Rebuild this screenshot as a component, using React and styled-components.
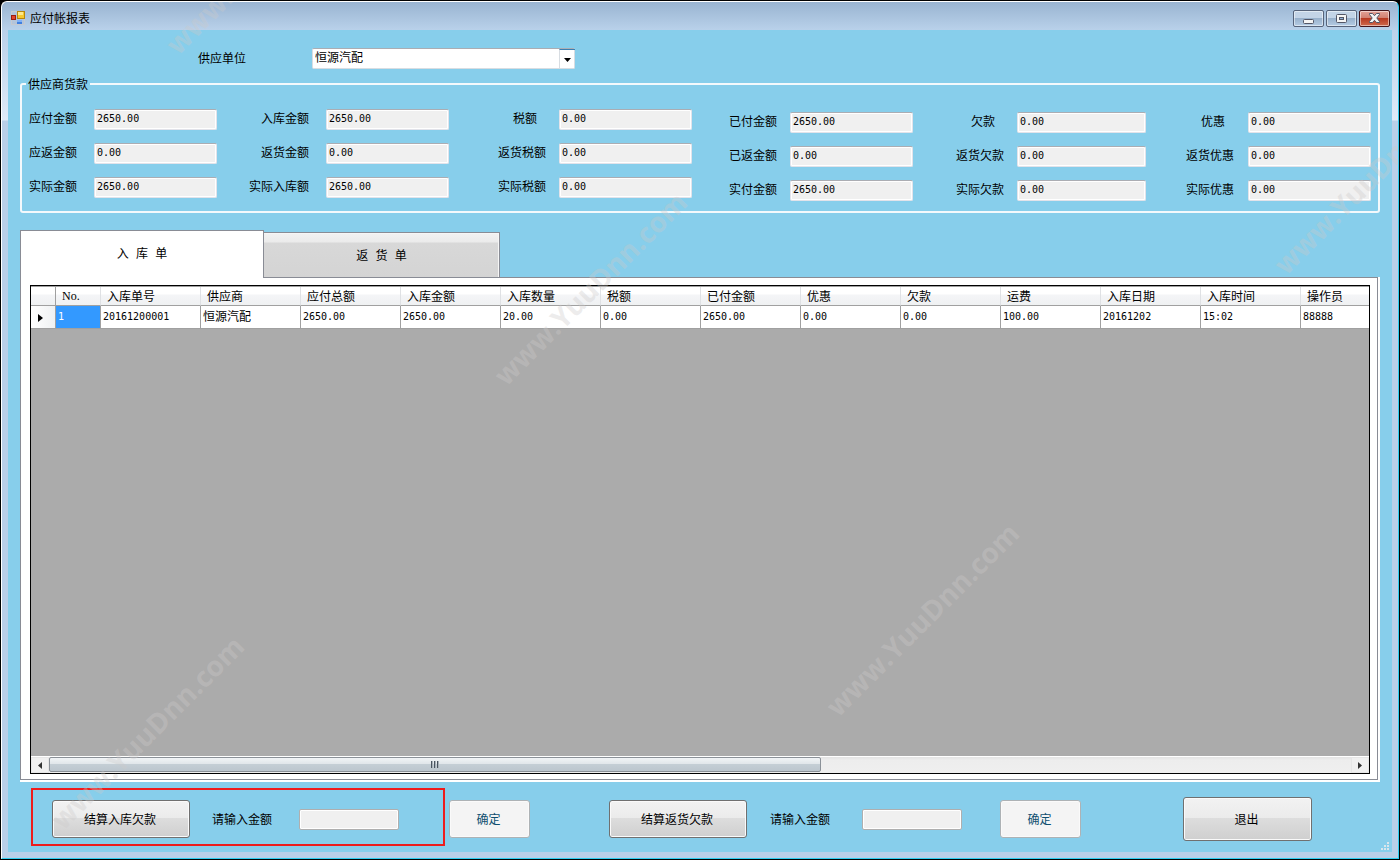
import React, { useState } from 'react'
import styled, { createGlobalStyle, css } from 'styled-components'

const GlobalStyle = createGlobalStyle`
    * {
        box-sizing: border-box;
    }

    body {
        margin: 0;
        background: #000000;
        font-family: 'Noto Sans CJK SC', sans-serif;
        font-size: 12px;
        line-height: 16px;
        color: #000000;
    }

    button,
    input,
    select {
        font: inherit;
        color: inherit;
    }
`

const summaryGroups = [
    {
        share: 188,
        width: 123,
        gap: 17,
        fields: [
            ['应付金额', '2650.00'],
            ['应返金额', '0.00'],
            ['实际金额', '2650.00'],
        ],
    },
    {
        share: 232,
        width: 123,
        gap: 17,
        fields: [
            ['入库金额', '2650.00'],
            ['返货金额', '0.00'],
            ['实际入库额', '2650.00'],
        ],
    },
    {
        share: 243,
        width: 133,
        gap: 13,
        fields: [
            ['税额', '0.00'],
            ['返货税额', '0.00'],
            ['实际税额', '0.00'],
        ],
    },
    {
        share: 221,
        width: 123,
        gap: 13,
        low: true,
        fields: [
            ['已付金额', '2650.00'],
            ['已返金额', '0.00'],
            ['实付金额', '2650.00'],
        ],
    },
    {
        share: 233,
        width: 129,
        gap: 13,
        low: true,
        fields: [
            ['欠款', '0.00'],
            ['返货欠款', '0.00'],
            ['实际欠款', '0.00'],
        ],
    },
    {
        share: 225,
        width: 123,
        gap: 14,
        low: true,
        fields: [
            ['优惠', '0.00'],
            ['返货优惠', '0.00'],
            ['实际优惠', '0.00'],
        ],
    },
]

const columns = [
    '入库单号',
    '供应商',
    '应付总额',
    '入库金额',
    '入库数量',
    '税额',
    '已付金额',
    '优惠',
    '欠款',
    '运费',
    '入库日期',
    '入库时间',
    '操作员',
]

const rows = [
    [
        '20161200001',
        '恒源汽配',
        '2650.00',
        '2650.00',
        '20.00',
        '0.00',
        '2650.00',
        '0.00',
        '0.00',
        '100.00',
        '20161202',
        '15:02',
        '88888',
    ],
]

const watermarks = [
    { x: 260, y: -45 },
    { x: 588, y: 286 },
    { x: 1368, y: 175 },
    { x: 145, y: 730 },
    { x: 920, y: 617 },
]

const FormIcon = () => (
    <svg width='14' height='14' viewBox='0 0 14 14' aria-hidden='true'>
        <rect x='0.5' y='0.5' width='13' height='13' fill='#b3c4da' stroke='#c5c9d0' />
        <rect x='6.5' y='0.5' width='7' height='7' fill='#f6c92f' stroke='#b8860b' />
        <rect x='7' y='1' width='5' height='3' fill='#fde98c' />
        <rect x='0.5' y='4.5' width='4' height='4' fill='#e0452c' stroke='#9c1c10' />
        <rect x='6' y='9' width='5' height='4' fill='#3f7fe0' />
        <rect x='6' y='9' width='5' height='2' fill='#7fb0f5' />
    </svg>
)

const SummaryGroup = ({ group }) => (
    <Group $low={group.low}>
        {group.fields.map(([label, value]) => (
            <Field key={label} $gap={group.gap}>
                <FieldLabel htmlFor={label} $short={label.length === 2}>
                    {label}
                </FieldLabel>
                <TextBox id={label} $width={group.width} value={value} readOnly />
            </Field>
        ))}
    </Group>
)

const App = () => {
    const [tab, setTab] = useState('in')

    return (
        <>
            <GlobalStyle />
            <Window>
                <TitleBar>
                    <FormIcon />
                    <Title>应付帐报表</Title>
                    <CaptionButton aria-label='最小化'>
                        <svg width='11' height='11' viewBox='0 0 11 11'>
                            <rect x='0.5' y='6.5' width='10' height='4' rx='1' fill='#f4f4f4' stroke='#535666' />
                        </svg>
                    </CaptionButton>
                    <CaptionButton aria-label='最大化'>
                        <svg width='11' height='9' viewBox='0 0 11 9'>
                            <rect x='0.5' y='0.5' width='10' height='8' rx='1' fill='#f4f4f4' stroke='#535666' />
                            <rect x='3.5' y='3.5' width='4' height='2' fill='#8fb0d6' stroke='#535666' />
                        </svg>
                    </CaptionButton>
                    <CaptionButton aria-label='关闭' $close>
                        <svg width='13' height='10' viewBox='0 0 13 10'>
                            <path
                                d='M1.500 .5H4.500L6.500 2.700 8.500 .5H11.500V1.500L8.800 5 11.500 8.500V9.500H8.500L6.500 7.300 4.500 9.500H1.500V8.500L4.200 5 1.500 1.500Z'
                                fill='#f4f4f4'
                                stroke='#535666'
                            />
                        </svg>
                    </CaptionButton>
                </TitleBar>

                <Client>
                    <SupplierRow>
                        <SupplierLabel htmlFor='supplier'>供应单位</SupplierLabel>
                        <SelectWrap>
                            <Select id='supplier'>
                                <option>恒源汽配</option>
                            </Select>
                            <SelectArrow>
                                <svg width='7' height='4' viewBox='0 0 7 4'>
                                    <path d='M0 0H7L3.5 4Z' fill='#000000' />
                                </svg>
                            </SelectArrow>
                        </SelectWrap>
                    </SupplierRow>

                    <Summary>
                        <legend>供应商货款</legend>
                        <SummaryGrid>
                            {summaryGroups.map((group) => (
                                <SummaryGroup key={group.fields[0][0]} group={group} />
                            ))}
                        </SummaryGrid>
                    </Summary>

                    <Tabs role='tablist'>
                        <Tab role='tab' $active={tab === 'in'} onClick={() => setTab('in')}>
                            入 库 单
                        </Tab>
                        <Tab role='tab' $active={tab === 'back'} onClick={() => setTab('back')}>
                            返 货 单
                        </Tab>
                    </Tabs>

                    <TabPanel role='tabpanel'>
                        <GridView>
                            <TableArea>
                                <Table>
                                    <colgroup>
                                        <col width='25' />
                                        <col width='45' />
                                        {columns.map((name) => (
                                            <col key={name} width='100' />
                                        ))}
                                    </colgroup>
                                    <thead>
                                        <tr>
                                            <th />
                                            <NumberHead>No.</NumberHead>
                                            {columns.map((name) => (
                                                <th key={name}>{name}</th>
                                            ))}
                                        </tr>
                                    </thead>
                                    <tbody>
                                        {rows.map((row, index) => (
                                            <tr key={row[0]}>
                                                <RowMarker>
                                                    <svg width='5' height='8' viewBox='0 0 5 8'>
                                                        <path d='M0 0L5 4L0 8Z' fill='#000000' />
                                                    </svg>
                                                </RowMarker>
                                                <SelectedCell>{index + 1}</SelectedCell>
                                                {row.map((cell, i) => (
                                                    <td key={columns[i]}>{cell}</td>
                                                ))}
                                            </tr>
                                        ))}
                                    </tbody>
                                </Table>
                            </TableArea>
                            <ScrollBar>
                                <ScrollButton aria-label='向左'>
                                    <svg width='4' height='7' viewBox='0 0 4 7'>
                                        <path d='M4 0V7L0 3.5Z' fill='#333333' />
                                    </svg>
                                </ScrollButton>
                                <Thumb>
                                    <svg width='9' height='7' viewBox='0 0 9 7'>
                                        <path d='M.5 0V7M3.500 0V7M6.500 0V7' stroke='#4a5560' />
                                        <path d='M1.500 0V7M4.500 0V7M7.500 0V7' stroke='#a9b2ba' />
                                    </svg>
                                </Thumb>
                                <TrackRest />
                                <ScrollButton aria-label='向右'>
                                    <svg width='4' height='7' viewBox='0 0 4 7'>
                                        <path d='M0 0V7L4 3.5Z' fill='#333333' />
                                    </svg>
                                </ScrollButton>
                            </ScrollBar>
                        </GridView>
                    </TabPanel>

                    <Footer>
                        <FooterGroup>
                            <Highlight>
                                <Button $width={138}>结算入库欠款</Button>
                                <AmountLabel htmlFor='amount-in'>请输入金额</AmountLabel>
                                <AmountBox id='amount-in' disabled />
                            </Highlight>
                            <Button $width={81} disabled>
                                确定
                            </Button>
                        </FooterGroup>
                        <FooterGroup>
                            <Button $width={138}>结算返货欠款</Button>
                            <AmountLabel htmlFor='amount-back' $wide>
                                请输入金额
                            </AmountLabel>
                            <AmountBox id='amount-back' disabled />
                            <Button $width={81} disabled>
                                确定
                            </Button>
                        </FooterGroup>
                        <FooterGroup>
                            <Button $width={129} $tall>
                                退出
                            </Button>
                        </FooterGroup>
                    </Footer>

                    <Grip width='9' height='9' viewBox='0 0 9 9'>
                        <path
                            d='M6 0h2v2h-2zM3 3h2v2h-2zM6 3h2v2h-2zM0 6h2v2h-2zM3 6h2v2h-2zM6 6h2v2h-2z'
                            fill='#d9e6ec'
                        />
                    </Grip>
                </Client>

                <WatermarkLayer aria-hidden='true'>
                    {watermarks.map((mark) => (
                        <Watermark key={`${mark.x}-${mark.y}`} style={{ left: mark.x, top: mark.y }}>
                            www.YuuDnn.com
                        </Watermark>
                    ))}
                </WatermarkLayer>
            </Window>
        </>
    )
}

export default App

const Window = styled.div`
    position: relative;
    display: flex;
    flex-direction: column;
    min-height: calc(100vh - 2px);
    margin: 1px;
    padding: 0 6px;
    border: 1px solid #ffffff;
    border-right-color: #2fcdf0;
    border-bottom-color: #2fcdf0;
    border-radius: 6px 6px 0 0;
    background: linear-gradient(#99b4d1 0, #b9d1ea 28px, #dfeaf7 118px, #b9cfe8 119px);
`

const TitleBar = styled.header`
    display: flex;
    align-items: center;
    height: 28px;
    gap: 2px;
    padding: 4px 3px 0 4px;
    margin: 0 -1px;
    background: linear-gradient(#99b4d1, #b9d1ea);
`

const Title = styled.h1`
    flex: 1;
    margin: 0 0 0 3px;
    font-size: 12px;
    font-weight: 400;
    line-height: 16px;
`

const CaptionButton = styled.button`
    display: flex;
    align-items: center;
    justify-content: center;
    width: 31px;
    height: 17px;
    padding: 0;
    border: 1px solid #56637a;
    border-radius: 2px;
    box-shadow: inset 0 0 0 1px rgba(255, 255, 255, 0.5);
    background: linear-gradient(#c3d4e7 0 50%, #98b1cc 50%, #b5cce4);

    ${({ $close }) =>
        $close &&
        css`
            border-color: #43141a;
            background: linear-gradient(#e3a297 0, #d07d6e 50%, #b83a22 50%, #cf6a4d);
        `}
`

const Client = styled.main`
    position: relative;
    display: flex;
    flex: 1;
    flex-direction: column;
    padding: 18px 12px 0;
    margin-bottom: 6px;
    background: #87ceeb;
`

const SupplierRow = styled.div`
    display: flex;
    align-items: center;
    padding-left: 178px;
`

const SupplierLabel = styled.label`
    width: 114px;
    padding-bottom: 2px;
`

const SelectWrap = styled.div`
    position: relative;
    width: 263px;
    height: 21px;
`

const Select = styled.select`
    width: 100%;
    height: 21px;
    padding: 0 18px 3px 2px;
    border: 1px solid #d8dde2;
    border-top-color: #abadb3;
    border-radius: 2px;
    appearance: none;
    background: #ffffff;
`

const SelectArrow = styled.span`
    position: absolute;
    top: 1px;
    right: 0;
    display: flex;
    align-items: center;
    justify-content: center;
    width: 16px;
    height: 20px;
    border-top: 1px solid #3c7fb1;
    border-left: 1px solid #d8dde2;
    pointer-events: none;
`

const Summary = styled.fieldset`
    min-width: 0;
    margin: 7px 0 0;
    padding: 0 7px 12px;
    border: 2px solid #f4f9fc;
    border-radius: 3px;

    legend {
        height: 16px;
        margin-left: -3px;
        padding: 0 2px;
        line-height: 16px;
    }
`

const SummaryGrid = styled.div`
    display: grid;
    grid-template-columns: ${summaryGroups.map((g) => `${g.share}fr`).join(' ')};
    padding-top: 17px;
`

const Group = styled.div`
    display: flex;
    flex-direction: column;
    gap: 13px;
    margin-bottom: -2px;
    padding-top: ${({ $low }) => ($low ? '3px' : '0')};
`

const Field = styled.div`
    display: flex;
    align-items: center;
    justify-content: flex-end;
    gap: ${({ $gap }) => $gap}px;
`

const FieldLabel = styled.label`
    padding-right: ${({ $short }) => ($short ? '9px' : '0')};
    padding-bottom: 3px;
    white-space: nowrap;
`

const inputFrame = css`
    height: 21px;
    border: 1px solid #e2e3ea;
    border-top-color: #abadb3;
    border-radius: 2px;
    background: #f0f0f0;
    box-shadow: inset 0 0 0 1px #ffffff;
`

const TextBox = styled.input`
    ${inputFrame}
    width: ${({ $width }) => $width}px;
    padding: 0 2px 2px;
    font-family: 'DejaVu Sans Mono', monospace;
    font-size: 10px;
`

const Tabs = styled.div`
    display: flex;
    align-items: flex-end;
    margin-top: 17px;
`

const Tab = styled.button`
    width: 236px;
    height: 45px;
    padding: 3px 0 0;
    border: 1px solid #898c95;
    border-left: 0;
    border-bottom: 0;
    background: linear-gradient(#f2f2f2 0, #ebebeb 9px, #d8d8d8 10px, #d4d4d4);
    box-shadow: inset -1px 1px 0 #f6f6f6;
    font-family: 'Liberation Mono', 'Noto Sans CJK SC', monospace;

    ${({ $active }) =>
        $active &&
        css`
            position: relative;
            z-index: 1;
            width: 244px;
            height: 48px;
            margin-bottom: -1px;
            padding: 0;
            border-left: 1px solid #898c95;
            background: #ffffff;
            box-shadow: none;
        `}
`

const TabPanel = styled.section`
    display: flex;
    flex: 1;
    flex-direction: column;
    padding: 7px 7px 5px 9px;
    margin-right: 2px;
    border: 1px solid #898c95;
    background: #ffffff;
    box-shadow: 1px 1px 0 1px #ffffff;
    clip-path: inset(0 -2px -2px 0);
`

const GridView = styled.div`
    display: flex;
    flex: 1;
    flex-direction: column;
    min-width: 0;
    border: 1px solid #000000;
    background: #ababab;
`

const TableArea = styled.div`
    flex: 1;
    width: 0;
    min-width: 100%;
    overflow: hidden;
`

const Table = styled.table`
    width: 1370px;
    table-layout: fixed;
    border-collapse: separate;
    border-spacing: 0;
    border-top: 1px solid #a0a0a0;

    th {
        height: 19px;
        padding: 0 0 0 6px;
        border-right: 1px solid #dfe1e4;
        border-bottom: 1px solid #a0a0a0;
        background: linear-gradient(#ffffff, #ffffff 7px, #f4f5f7 8px, #eff1f2);
        font-weight: 400;
        line-height: 16px;
        text-align: left;
        white-space: nowrap;
    }

    th:first-child {
        border-right-color: #a0a0a0;
    }

    td {
        height: 23px;
        padding: 0 0 0 2px;
        border-right: 1px solid #a0a0a0;
        border-bottom: 1px solid #a0a0a0;
        background: #ffffff;
        font-family: 'DejaVu Sans Mono', 'Noto Sans CJK SC', monospace;
        font-size: 10px;
        line-height: 16px;
        white-space: nowrap;
    }

    td:nth-child(4) {
        font-size: 12px;
    }
`

const NumberHead = styled.th`
    font-family: 'Liberation Serif', serif;
`

const RowMarker = styled.td`
    && {
        padding: 2px 0 0 7px;
        background: linear-gradient(90deg, #ffffff, #eff1f2);
        line-height: 0;
    }
`

const SelectedCell = styled.td`
    && {
        background: #3399ff;
        color: #ffffff;
    }
`

const ScrollBar = styled.div`
    display: flex;
    height: 17px;
    border-top: 1px solid #ffffff;
    background: linear-gradient(#e3e3e3, #ededed 3px, #efefef);
`

const ScrollButton = styled.button`
    display: flex;
    align-items: center;
    justify-content: center;
    width: 18px;
    padding: 0;
    border: 1px solid #e6e6e6;
    background: #f0f0f0;
`

const Thumb = styled.div`
    display: flex;
    flex: 770;
    align-items: center;
    justify-content: center;
    height: 15px;
    border: 1px solid #8b9198;
    border-radius: 2px;
    background: linear-gradient(#f1f4f6, #dfe5e9 50%, #c4ced5 50%, #bcc6ce);
`

const TrackRest = styled.div`
    flex: 530;
`

const Footer = styled.footer`
    display: grid;
    grid-template-columns: 578fr 574fr 197fr;
    align-items: center;
    height: 72px;
    padding: 6px 0 0 11px;
`

const FooterGroup = styled.div`
    display: flex;
    align-items: center;

    > button:last-child:not(:first-child) {
        margin-left: 38px;
    }

    > div + button:last-child:not(:first-child) {
        margin-left: 4px;
    }
`

const Highlight = styled.div`
    display: flex;
    align-items: center;
    width: 414px;
    height: 58px;
    margin-bottom: 4px;
    padding: 4px 0 0 19px;
    border: 2px solid #ee1c1c;
`

const Button = styled.button`
    width: ${({ $width }) => $width}px;
    height: ${({ $tall }) => ($tall ? '44px' : '38px')};
    padding: 0 2px 0 0;
    border: 1px solid #707070;
    border-radius: 3px;
    box-shadow: inset 0 0 0 1px #fafafa;
    background: linear-gradient(#f2f2f2, #ebebeb 48%, #dddddd 48%, #cfcfcf);

    &:disabled {
        border-color: #adb2b5;
        background: #f4f4f4;
        color: #0f4f70;
    }
`

const AmountLabel = styled.label`
    width: ${({ $wide }) => ($wide ? '92px' : '87px')};
    margin-left: ${({ $wide }) => ($wide ? '23px' : '22px')};
`

const AmountBox = styled.input`
    ${inputFrame}
    width: 100px;
    padding: 0 2px;
    border-color: #afafaf;
`

const Grip = styled.svg`
    position: absolute;
    right: 2px;
    bottom: 1px;
`

const WatermarkLayer = styled.div`
    position: absolute;
    inset: 0;
    overflow: hidden;
    pointer-events: none;
`

const Watermark = styled.span`
    position: absolute;
    color: rgba(204, 202, 202, 0.36);
    font-family: 'Open Sans', sans-serif;
    font-size: 28px;
    font-weight: 700;
    line-height: 40px;
    transform: translate(-50%, -50%) rotate(-45deg);
`
